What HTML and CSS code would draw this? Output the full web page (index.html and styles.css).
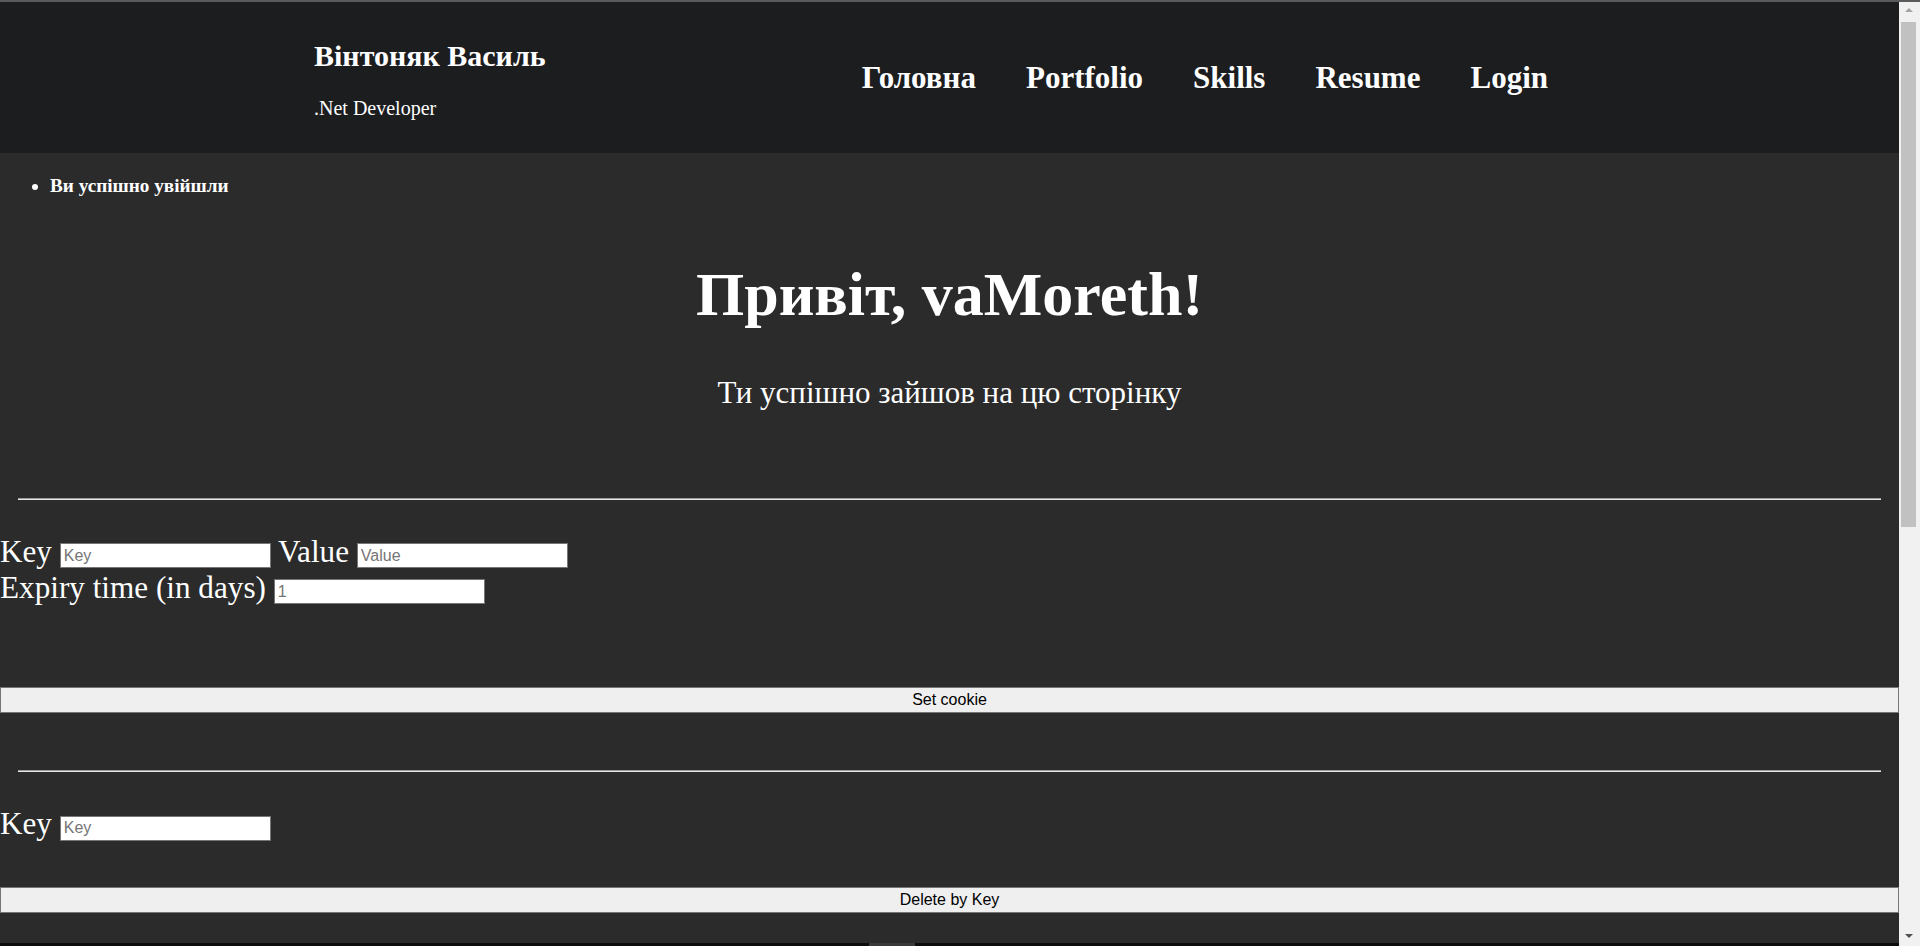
FILE: index.html
```html
<!DOCTYPE html>
<html lang="uk">
<head>
<meta charset="utf-8">
<title>Вінтоняк Василь</title>
<link rel="stylesheet" href="styles.css">
</head>
<body>
<div class="topline"></div>
<div class="page">
  <header class="site-header">
    <div class="brand">
      <h2 class="brand-name">Вінтоняк Василь</h2>
      <p class="brand-role">.Net Developer</p>
    </div>
    <nav class="nav">
      <a href="#">Головна</a>
      <a href="#">Portfolio</a>
      <a href="#">Skills</a>
      <a href="#">Resume</a>
      <a href="#">Login</a>
    </nav>
  </header>
  <main class="content">
    <ul class="messages">
      <li>Ви успішно увійшли</li>
    </ul>
    <h1 class="greet">Привіт, vaMoreth!</h1>
    <p class="greet-sub">Ти успішно зайшов на цю сторінку</p>
    <hr class="rule rule-first">
    <form class="cookie-form">
      <div class="row row-set">Key <input class="field" type="text" placeholder="Key"> Value <input class="field" type="text" placeholder="Value"></div>
      <div class="row">Expiry time (in days) <input class="field" type="text" placeholder="1"></div>
      <button class="wide-btn btn-set" type="button">Set cookie</button>
    </form>
    <hr class="rule rule-second">
    <form class="cookie-form">
      <div class="row row-del">Key <input class="field" type="text" placeholder="Key"></div>
      <button class="wide-btn btn-del" type="button">Delete by Key</button>
    </form>
  </main>
</div>
<div class="scrollbar">
  <div class="sb-up"></div>
  <div class="sb-thumb"></div>
  <div class="sb-down"></div>
</div>
<div class="bottom-strip"><div class="bottom-knob"></div></div>
</body>
</html>
```
FILE: styles.css
```css
html, body {
  margin: 0;
  padding: 0;
  height: 100%;
  overflow: hidden;
}
body {
  background: #2b2b2b;
  color: #ffffff;
  font-family: "Liberation Serif", "Times New Roman", serif;
}
.topline {
  height: 2px;
  background: #5a5b5d;
}
.page {
  margin-right: 21px;
}
.site-header {
  display: flex;
  align-items: center;
  height: 151px;
  background: #1c1d1f;
  padding-left: 314px;
  padding-right: 351px;
}
.brand {
  display: flex;
  flex-direction: column;
  padding-top: 4px;
}
.brand-name {
  margin: 0;
  font-size: 30px;
  font-weight: bold;
}
.brand-role {
  margin: 24px 0 0;
  font-size: 20px;
}
.nav {
  margin-left: auto;
  display: flex;
  gap: 50px;
}
.nav a {
  color: #ffffff;
  text-decoration: none;
  font-size: 31px;
  font-weight: bold;
}
.content {
  display: flow-root;
}
.messages {
  margin: 22px 0 0;
  padding-left: 50px;
  font-size: 19.2px;
  font-weight: bold;
}
.greet {
  margin: 62.2px 0 0;
  text-align: center;
  font-size: 62px;
  font-weight: bold;
}
.greet-sub {
  margin: 44.8px 0 0;
  text-align: center;
  font-size: 31px;
}
.rule {
  margin: 0 18px;
  border: none;
  border-top: 1px solid #9b9b9b;
  border-bottom: 1px solid #e6e6e6;
  height: 0;
}
.rule-first {
  margin-top: 86.7px;
}
.rule-second {
  margin-top: 57px;
}
.cookie-form {
  margin: 0;
}
.row {
  font-size: 31.2px;
}
.row-set {
  margin-top: 34.2px;
}
.row-del {
  margin-top: 34.3px;
}
.field {
  box-sizing: border-box;
  width: 211px;
  height: 25px;
  padding: 1px 3px;
  border: 1px solid #767676;
  background: #ffffff;
  font-family: "Liberation Sans", Arial, sans-serif;
  font-size: 16px;
  color: #000;
  vertical-align: 1px;
}
.field::placeholder {
  color: #757575;
}
.wide-btn {
  display: block;
  box-sizing: border-box;
  width: 100%;
  height: 26px;
  padding: 0;
  background: #efefef;
  border: 1px solid #767676;
  color: #000;
  font-family: "Liberation Sans", Arial, sans-serif;
  font-size: 16px;
}
.btn-set {
  margin-top: 81px;
}
.btn-del {
  margin-top: 45px;
}
.scrollbar {
  position: fixed;
  top: 2px;
  right: 0;
  bottom: 0;
  width: 21px;
  background: #f1f1f1;
}
.sb-thumb {
  position: absolute;
  top: 20px;
  left: 2px;
  width: 15px;
  height: 505px;
  background: #c1c1c1;
}
.sb-up {
  position: absolute;
  top: 6px;
  left: 6px;
  width: 0;
  height: 0;
  border-left: 4px solid transparent;
  border-right: 4px solid transparent;
  border-bottom: 4px solid #a3a3a3;
}
.sb-down {
  position: absolute;
  bottom: 8px;
  left: 6px;
  width: 0;
  height: 0;
  border-left: 4px solid transparent;
  border-right: 4px solid transparent;
  border-top: 4px solid #505050;
}
.bottom-strip {
  position: fixed;
  left: 0;
  right: 21px;
  bottom: 0;
  height: 3px;
  background: #0c0c0c;
}
.bottom-knob {
  position: absolute;
  left: 869px;
  top: 0;
  width: 46px;
  height: 3px;
  background: #3a3a3a;
}
```
